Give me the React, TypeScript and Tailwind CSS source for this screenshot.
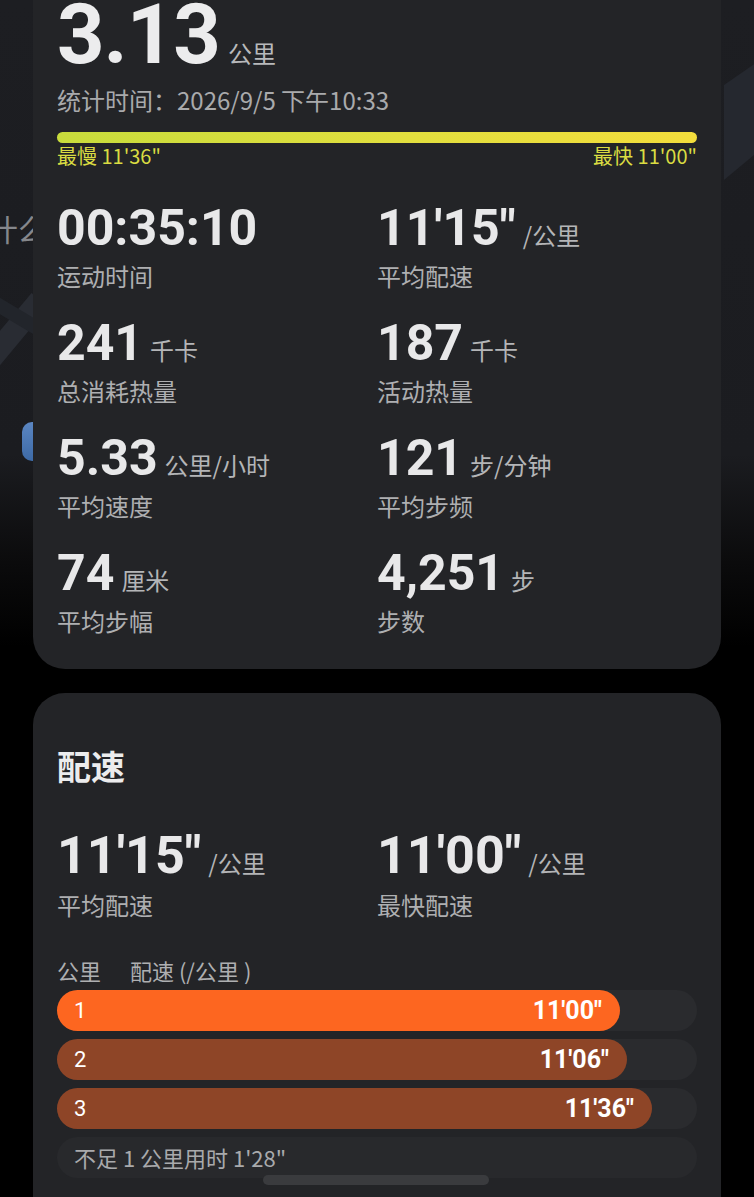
const NUM = "font-['Roboto','Noto_Sans_CJK_SC',sans-serif]"
const CJK = "font-['Noto_Sans_CJK_SC','Noto_Sans',sans-serif]"

interface Stat {
  value: string
  unit: string
  label: string
}

const stats: Stat[] = [
  { value: '00:35:10', unit: '', label: '运动时间' },
  { value: "11'15\"", unit: '/公里', label: '平均配速' },
  { value: '241', unit: '千卡', label: '总消耗热量' },
  { value: '187', unit: '千卡', label: '活动热量' },
  { value: '5.33', unit: '公里/小时', label: '平均速度' },
  { value: '121', unit: '步/分钟', label: '平均步频' },
  { value: '74', unit: '厘米', label: '平均步幅' },
  { value: '4,251', unit: '步', label: '步数' },
]

const splits = [
  { km: '1', pace: "11'00\"", width: 563, fastest: true },
  { km: '2', pace: "11'06\"", width: 570, fastest: false },
  { km: '3', pace: "11'36\"", width: 595, fastest: false },
]

function StatCell({ s, big }: { s: Stat; big?: boolean }) {
  return (
    <div>
      <div className="flex items-baseline">
        <span
          className={`${NUM} font-bold text-[#e8e8e9] ${
            big ? 'text-[52px] leading-[58px]' : 'text-[50px] leading-[56px]'
          }`}
        >
          {s.value}
        </span>
        {s.unit ? (
          <span className={`${CJK} ml-[7px] text-[24px] leading-[30px] text-[#b4b5b7]`}>{s.unit}</span>
        ) : null}
      </div>
      <div className={`${CJK} mt-[5px] text-[24px] leading-[30px] text-[#aeafb1]`}>{s.label}</div>
    </div>
  )
}

function Backdrop() {
  return (
    <div className="absolute inset-0 bg-[linear-gradient(180deg,#1d1e22_0%,#1b1c20_38%,#0b0b0c_47%,#000_54%)]">
      <svg className="absolute left-0 top-0" width="754" height="600" viewBox="0 0 754 600">
        <path d="M-10 360 L40 300" stroke="#292c33" strokeWidth="22" fill="none" />
        <path d="M-10 300 L40 330 L40 520" stroke="#22252b" strokeWidth="14" fill="none" />
        <path d="M724 180 L760 150 L760 60 L724 85 Z" fill="#25282f" />
      </svg>
      <span className={`${CJK} absolute left-[-12px] top-[210px] text-[30px] leading-[36px] text-[#85878c]`}>
        什么
      </span>
      <div className="absolute left-[22px] top-[422px] h-[39px] w-[20px] rounded-l-[10px] bg-[linear-gradient(180deg,#5b86c2,#3d6aa6)]" />
    </div>
  )
}

export default function App() {
  return (
    <div className="relative h-[1197px] w-[754px] overflow-hidden bg-black">
      <Backdrop />

      <div className="relative flex flex-col gap-[24px] px-[33px]">
        {/* summary card */}
        <section className="rounded-b-[32px] bg-[#232427] px-6 pb-[33px]">
          <div className="flex items-baseline">
            <span className={`${NUM} text-[83px] font-bold leading-[70px] tracking-[-1px] text-[#ececed]`}>3.13</span>
            <span className={`${CJK} ml-[8px] text-[24px] leading-[30px] text-[#b8b9bb]`}>公里</span>
          </div>
          <div className={`${CJK} mt-[16px] text-[24px] leading-[28px] text-[#a9aaac]`}>
            统计时间：2026/9/5 下午10:33
          </div>
          <div className="mt-[18px] h-[11px] rounded-full bg-[linear-gradient(90deg,#c8dc3c,#e2df3e_55%,#f3dd3c)]" />
          <div className={`${CJK} mt-[2px] flex justify-between text-[20px] leading-[22px] text-[#dadc42]`}>
            <span>最慢 11'36"</span>
            <span>最快 11'00"</span>
          </div>
          <div className="mt-[33px] grid grid-cols-2 gap-y-[24px]">
            {stats.map((s) => (
              <StatCell key={s.label} s={s} />
            ))}
          </div>
        </section>

        {/* pace card */}
        <section className="rounded-t-[32px] bg-[#232427] px-6 pb-[60px] pt-[53px]">
          <h2 className={`${CJK} text-[34px] font-bold leading-[40px] text-[#ececed]`}>配速</h2>
          <div className="mt-[41px] grid grid-cols-2">
            <StatCell big s={{ value: "11'15\"", unit: '/公里', label: '平均配速' }} />
            <StatCell big s={{ value: "11'00\"", unit: '/公里', label: '最快配速' }} />
          </div>
          <div className={`${CJK} mt-[36px] flex text-[22px] leading-[28px] text-[#aeafb1]`}>
            <span className="w-[73px]">公里</span>
            <span>配速 (/公里 )</span>
          </div>
          <div className="mt-[6px] flex flex-col gap-[8px]">
            {splits.map((r) => (
              <div key={r.km} className="h-[41px] rounded-full bg-[#2a2b2e]">
                <div
                  className={`flex h-full items-center justify-between rounded-full pl-[17px] pr-[18px] ${
                    r.fastest ? 'bg-[#fd6620]' : 'bg-[#8e4527]'
                  }`}
                  style={{ width: r.width }}
                >
                  <span className={`${NUM} text-[22px] text-white`}>{r.km}</span>
                  <span className={`${NUM} text-[25px] font-bold text-white`}>{r.pace}</span>
                </div>
              </div>
            ))}
            <div className="flex h-[41px] items-center rounded-full bg-[#28292c] pl-[17px]">
              <span className={`${CJK} text-[22px] text-[#a9aaac]`}>不足 1 公里用时 1'28"</span>
            </div>
          </div>
        </section>
      </div>

      <div className="absolute left-[263px] top-[1175px] h-[10px] w-[226px] rounded-full bg-[#3a3b3e]" />
    </div>
  )
}
